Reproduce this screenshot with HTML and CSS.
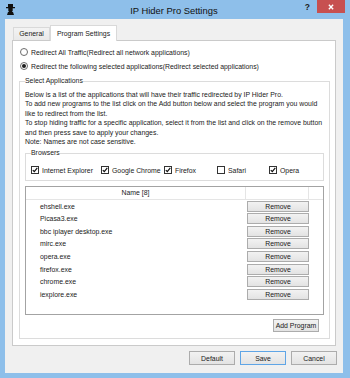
FILE: index.html
```html
<!DOCTYPE html>
<html lang="en">
<head>
    <meta charset="UTF-8">
    <title>IP Hider Pro Settings</title>
    <link rel="stylesheet" href="styles.css">
</head>
<body>
    <div class="window">
        <div class="titlebar">
            <svg class="app-icon" viewBox="0 0 9 11"><path d="M2 0h5v3h2v1.3H0V3h2z M2.3 4.3h4.4v2.5L6 8H3L2.3 6.8z M1 11l1-3h5l1 3z" fill="#111"/></svg>
            <div class="title">IP Hider Pro Settings</div>
            <div class="help">?</div>
            <div class="close"><svg viewBox="0 0 7 7"><path d="M1 1l5 5M6 1L1 6" stroke="#fff" stroke-width="1.6"/></svg></div>
        </div>

        <div class="client">
            <div class="tabs">
                <div class="tab">General</div>
                <div class="tab active">Program Settings</div>
            </div>

            <div class="panel">
                <div class="radio-row"><span class="radio"></span>Redirect All Traffic(Redirect all network applications)</div>
                <div class="radio-row"><span class="radio checked"></span>Redirect the following selected applications(Redirect selected applications)</div>

                <fieldset class="group apps">
                    <legend>Select Applications</legend>
                    <p class="info">
                        Below is a list of the applications that will have their traffic redirected by IP Hider Pro.<br>
                        To add new programs to the list click on the Add button below and select the program you would<br>
                        like to redirect from the list.<br>
                        To stop hiding traffic for a specific application, select it from the list and click on the remove button<br>
                        and then press save to apply your changes.<br>
                        Note: Names are not case sensitive.
                    </p>

                    <fieldset class="group browsers">
                        <legend>Browsers</legend>
                        <div class="browser-list">
                            <div class="check-item"><span class="checkbox"><svg viewBox="0 0 6 6"><path d="M0.8 3.2l1.5 1.5L5.3 0.9" stroke="#111" stroke-width="1.2" fill="none"/></svg></span>Internet Explorer</div>
                            <div class="check-item"><span class="checkbox"><svg viewBox="0 0 6 6"><path d="M0.8 3.2l1.5 1.5L5.3 0.9" stroke="#111" stroke-width="1.2" fill="none"/></svg></span>Google Chrome</div>
                            <div class="check-item"><span class="checkbox"><svg viewBox="0 0 6 6"><path d="M0.8 3.2l1.5 1.5L5.3 0.9" stroke="#111" stroke-width="1.2" fill="none"/></svg></span>Firefox</div>
                            <div class="check-item"><span class="checkbox"></span>Safari</div>
                            <div class="check-item"><span class="checkbox"><svg viewBox="0 0 6 6"><path d="M0.8 3.2l1.5 1.5L5.3 0.9" stroke="#111" stroke-width="1.2" fill="none"/></svg></span>Opera</div>
                        </div>
                    </fieldset>

                    <div class="listbox">
                        <div class="list-head">
                            <div class="col-name">Name [8]</div>
                            <div class="col-btn"></div>
                            <div class="col-rest"></div>
                        </div>
                        <div class="list-row"><div class="col-name">ehshell.exe</div><div class="col-btn"><button class="btn remove">Remove</button></div></div>
                        <div class="list-row"><div class="col-name">Picasa3.exe</div><div class="col-btn"><button class="btn remove">Remove</button></div></div>
                        <div class="list-row"><div class="col-name">bbc iplayer desktop.exe</div><div class="col-btn"><button class="btn remove">Remove</button></div></div>
                        <div class="list-row"><div class="col-name">mirc.exe</div><div class="col-btn"><button class="btn remove">Remove</button></div></div>
                        <div class="list-row"><div class="col-name">opera.exe</div><div class="col-btn"><button class="btn remove">Remove</button></div></div>
                        <div class="list-row"><div class="col-name">firefox.exe</div><div class="col-btn"><button class="btn remove">Remove</button></div></div>
                        <div class="list-row"><div class="col-name">chrome.exe</div><div class="col-btn"><button class="btn remove">Remove</button></div></div>
                        <div class="list-row"><div class="col-name">iexplore.exe</div><div class="col-btn"><button class="btn remove">Remove</button></div></div>
                    </div>

                    <div class="add-row"><button class="btn add">Add Program</button></div>
                </fieldset>
            </div>

            <div class="footer">
                <button class="btn">Default</button>
                <button class="btn save">Save</button>
                <button class="btn">Cancel</button>
            </div>
        </div>
    </div>
</body>
</html>
```

FILE: styles.css
```css
body {
    margin: 0;
    font-family: "Liberation Sans", Arial, sans-serif;
    font-size: 6.9px;
    color: #1a1a1a;
}
.window {
    width: 350px;
    height: 378px;
    background: #8ebfea; /* win8 frame */
    display: flex;
    flex-direction: column;
}
.titlebar {
    height: 19px;
    flex-shrink: 0;
    display: flex;
    align-items: flex-start;
}
.app-icon {
    width: 9px;
    height: 11px;
    margin: 4px 0 0 6px;
}
.title {
    flex: 1;
    text-align: center;
    font-size: 9.4px;
    line-height: 21px;
    padding-left: 28px;
    color: #111;
}
.help {
    font-weight: bold;
    font-size: 8.5px;
    margin: 2px 7px 0 0;
}
.close {
    width: 28px;
    height: 13px;
    margin-right: 5px;
    background: #c75050;
    display: flex;
    align-items: center;
    justify-content: center;
}
.close svg {
    width: 6px;
    height: 6px;
}
.client {
    flex: 1;
    margin: 0 7px 5px 5px;
    background: #f0f0f0;
    display: flex;
    flex-direction: column;
}
.tabs {
    display: flex;
    align-items: flex-end;
    height: 15px;
    margin-top: 6px;
    padding-left: 8px;
}
.tab {
    box-sizing: border-box;
    width: 37px;
    height: 13px;
    line-height: 12px;
    text-align: center;
    border: 1px solid #d9d9d9;
    border-bottom: none;
    background: linear-gradient(#f3f3f3, #e9e9e9);
}
.tab.active {
    width: 67px;
    height: 16px;
    line-height: 15px;
    margin-bottom: -1px;
    background: #fff;
    position: relative;
    z-index: 1;
}
.panel {
    margin: 0 7px;
    padding: 4px 0 6px;
    border: 1px solid #cacaca;
    background: #fff;
}
.radio-row {
    display: flex;
    align-items: center;
    gap: 3px;
    height: 14px;
    padding-left: 7px;
    white-space: nowrap;
}
.radio {
    box-sizing: border-box;
    width: 8px;
    height: 8px;
    border: 1px solid #6b6b6b;
    border-radius: 50%;
    background: #fff;
    display: flex;
    align-items: center;
    justify-content: center;
}
.radio.checked::after {
    content: "";
    width: 4px;
    height: 4px;
    border-radius: 50%;
    background: #1c1c1c;
}
.group {
    margin: 0;
    border: 1px solid #dcdcdc;
    min-width: 0;
}
.group legend {
    padding: 0;
    line-height: 10px;
}
.apps {
    margin: 3px 5px 0 6px;
    padding: 0 5px 6px;
}
.info {
    margin: 3.5px 0 0;
    line-height: 9.5px;
    white-space: nowrap;
}
.browsers {
    margin-top: 1.5px;
    padding: 0 5px 4px;
}
.browser-list {
    display: grid;
    grid-template-columns: 70px 63px 53px 52px auto;
    align-items: center;
    height: 12px;
    margin-top: 6px;
}
.check-item {
    display: flex;
    align-items: center;
    gap: 3px;
    white-space: nowrap;
}
.checkbox {
    box-sizing: border-box;
    width: 8px;
    height: 8px;
    border: 1px solid #333;
    background: #fff;
    display: flex;
}
.checkbox svg {
    width: 6px;
    height: 6px;
}
.listbox {
    box-sizing: border-box;
    height: 129px;
    margin-top: 5px;
    border: 1px solid #a3a3a3;
    background: #fff;
}
.list-head {
    box-sizing: border-box;
    display: flex;
    height: 13px;
    line-height: 12px;
    border-bottom: 1px solid #e5e5e5;
}
.col-name {
    box-sizing: border-box;
    width: 220px;
}
.col-btn {
    box-sizing: border-box;
    width: 63px;
}
.col-rest {
    flex: 1;
}
.list-head .col-name {
    text-align: center;
    border-right: 1px solid #e5e5e5;
}
.list-head .col-btn {
    border-right: 1px solid #e5e5e5;
}
.list-row {
    display: flex;
    align-items: center;
    height: 12.57px;
}
.list-row .col-name {
    padding-left: 14px;
    white-space: nowrap;
}
.btn {
    box-sizing: border-box;
    width: 46px;
    height: 14px;
    padding: 0;
    font: inherit;
    color: #1a1a1a;
    border: 1px solid #acacac;
    background: linear-gradient(#f2f2f2, #e3e3e3);
}
.btn.remove {
    width: 62px;
    height: 11px;
    margin-left: 1px;
    display: block;
}
.add-row {
    display: flex;
    justify-content: flex-end;
    margin-top: 4px;
    padding-right: 5px;
}
.btn.add {
    height: 13px;
}
.footer {
    display: flex;
    justify-content: flex-end;
    gap: 5px;
    margin-top: 5px;
    padding-right: 6px;
}
.btn.save {
    border-color: #5fa5e6;
}
```
